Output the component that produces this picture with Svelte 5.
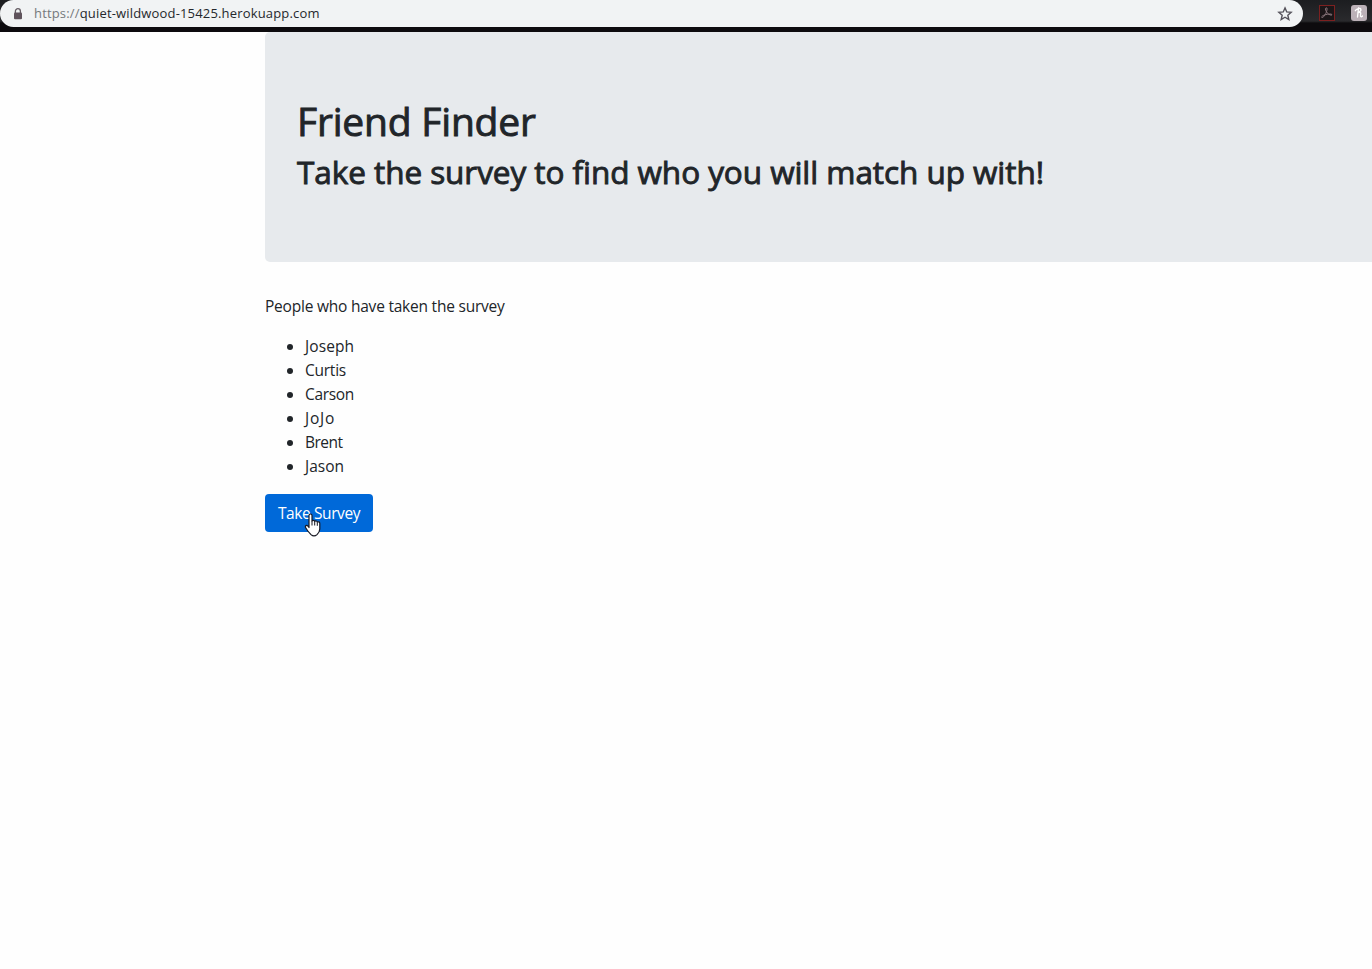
<script>
  const people = [
    { name: 'Joseph', tracking: 0.1 },
    { name: 'Curtis', tracking: -0.25 },
    { name: 'Carson', tracking: -0.35 },
    { name: 'JoJo', tracking: 0.8 },
    { name: 'Brent', tracking: -0.5 },
    { name: 'Jason', tracking: 0 },
  ];
</script>

<div class="window">
  <header class="toolbar">
    <div class="address">
      <svg class="lock" width="10" height="12" viewBox="0 0 10 12">
        <path d="M2.4 5V3.2a2.5 2.5 0 0 1 5 0V5" fill="none" stroke="#655c63" stroke-width="1.3" />
        <rect x="1" y="4.4" width="8" height="6.8" rx="1" fill="#5f535c" />
      </svg>
      <span class="url"><span class="scheme">https://</span>quiet-wildwood-15425.herokuapp.com</span>
      <svg class="star" width="16" height="16" viewBox="0 0 16 16">
        <path d="M8 1.9l1.75 4.05 4.4.4-3.33 2.9 1 4.3L8 11.27l-3.82 2.28 1-4.3-3.33-2.9 4.4-.4z" fill="none" stroke="#55525a" stroke-width="1.4" />
      </svg>
    </div>
    <div class="extensions">
      <svg width="16" height="16" viewBox="0 0 16 16">
        <rect x=".5" y=".5" width="15" height="15" fill="#1b1618" stroke="#7c2020" />
        <path d="M7 2.800c1.800-.2 1 2.700.2 4.700-.8 2.100-2.900 5.400-4.300 5-1-.5.500-2 3.500-2.800 2.700-.8 6.400-1 6.600 0 .1 1-2.900.3-4.600-1.600C7 6.500 5.800 3.500 7 2.800z" fill="none" stroke="#8b777d" stroke-width="1" />
      </svg>
      <svg width="16" height="16" viewBox="0 0 16 16">
        <rect width="16" height="16" rx="3" fill="#bcb1b8" />
        <path d="M7.500 3L6.500 12M4.300 5.700c1-2 5.200-3.200 5.600-1.300.3 1.500-1.500 2.600-3 3M7.500 7.500c2.900-.8 2.300 1 2 2.500-.3 1.800.8 2.300 2 1" fill="none" stroke="#fff" stroke-width="1.350" stroke-linecap="round" />
      </svg>
    </div>
  </header>

  <main>
    <section class="jumbotron">
      <h1>Friend Finder</h1>
      <h2>Take the survey to find who you will match up with!</h2>
    </section>
    <p>People who have taken the survey</p>
    <ul>
      {#each people as person}
        <li><span style:letter-spacing="{person.tracking}px">{person.name}</span></li>
      {/each}
    </ul>
    <button>
      <span>Take Survey</span>
      <svg class="pointer" width="18" height="24" viewBox="0 0 18 24">
        <path d="M5 14.500V2.500C5 .5 8 .5 8 2.500V8c.5-1 2.500-.8 2.700.5.700-1 2.500-.6 2.600.7.900-.8 2.500-.4 2.500 1.200V16c0 2.500-1.200 4-2.800 5.600-1.700 1.500-4.300 1.500-6 0C5.300 19.900 3 17.200 1.700 14.700c-1-2 .9-3 2.300-1.600z" fill="#fff" stroke="#171923" stroke-width="1.200" stroke-linejoin="round" />
        <path d="M8 8v4.500M10.700 8.700v3.800M13.300 9.500v3.300" fill="none" stroke="#171923" />
      </svg>
    </button>
  </main>
</div>

<style>
  :global(body) {
    margin: 0;
    background: #fefefe;
  }
  .window {
    height: 969px;
    overflow: hidden;
    color: #212529;
    font-family: 'Open Sans', 'Noto Sans', sans-serif;
    font-size: 15.5px;
    line-height: 24px;
  }
  .toolbar {
    display: flex;
    height: 32px;
    background: linear-gradient(#1c1d20 0, #2a2a2d 21px, #1c1c1e 22px, #0d0b0e 23px, #0d0b0e 100%);
  }
  .address {
    box-sizing: border-box;
    display: flex;
    align-items: center;
    width: 1303px;
    height: 27px;
    padding: 0 10px 0 13px;
    border-radius: 14px;
    background: #f1f3f4;
  }
  .url {
    flex: 1;
    margin-left: 11px;
    padding-bottom: 2px;
    font-size: 13px;
    letter-spacing: 0.17px;
    color: #25282c;
  }
  .scheme {
    color: #75797c;
  }
  .extensions {
    display: flex;
    gap: 16px;
    padding: 5px 0 0 16px;
  }
  .extensions svg {
    flex: none;
  }
  main {
    margin-left: 265px;
  }
  .jumbotron {
    box-sizing: border-box;
    height: 230px;
    padding: 65px 32px;
    margin-bottom: 32px;
    border-radius: 5px 0 0 5px;
    background: #e7eaed;
    white-space: nowrap;
  }
  h1,
  h2 {
    margin: 0 0 8px;
    font-weight: 400;
    -webkit-text-stroke: 0.9px currentColor;
  }
  h1 {
    font-size: 39px;
    line-height: 48px;
    letter-spacing: -0.2px;
  }
  h2 {
    font-size: 31.5px;
    line-height: 38px;
    letter-spacing: -0.06px;
    font-variant-ligatures: none;
  }
  p {
    margin: 0 0 16px;
    letter-spacing: -0.22px;
  }
  ul {
    margin: 0 0 16px;
    padding-left: 40px;
  }
  button {
    position: relative;
    display: block;
    width: 108px;
    height: 38px;
    padding: 0;
    border: 0;
    border-radius: 4px;
    background: #0069d9;
    color: #fff;
    font: inherit;
    letter-spacing: -0.4px;
    white-space: nowrap;
  }
  .pointer {
    position: absolute;
    left: 39px;
    top: 19px;
  }
</style>
